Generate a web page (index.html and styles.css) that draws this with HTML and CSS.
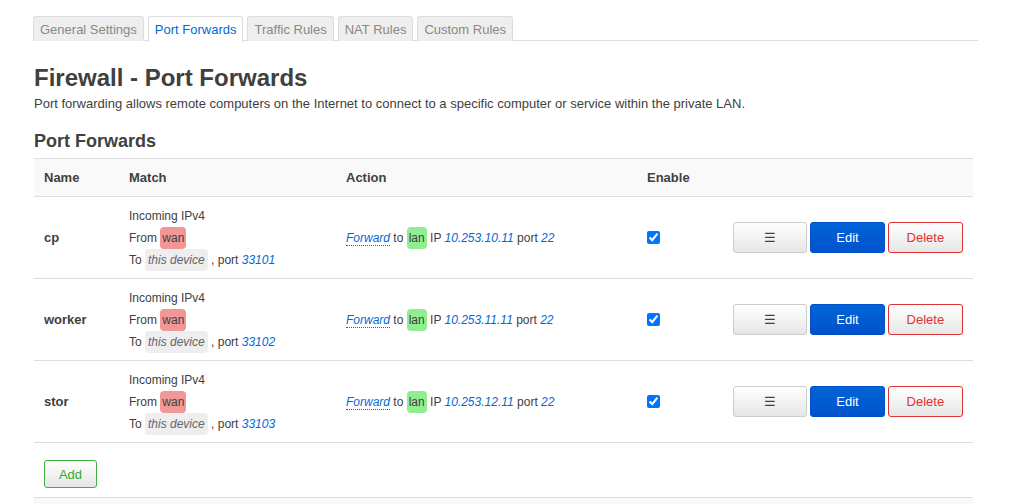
FILE: index.html
```html
<!DOCTYPE html>
<html>
<head>
<meta charset="utf-8">
<link rel="stylesheet" href="styles.css">
</head>
<body>
<div class="page">
  <ul class="tabs">
    <li class="tab">General Settings</li>
    <li class="tab active">Port Forwards</li>
    <li class="tab">Traffic Rules</li>
    <li class="tab">NAT Rules</li>
    <li class="tab">Custom Rules</li>
  </ul>
  <div class="content">
    <h2 class="title">Firewall - Port Forwards</h2>
    <p class="desc">Port forwarding allows remote computers on the Internet to connect to a specific computer or service within the private LAN.</p>
    <h3 class="section">Port Forwards</h3>
    <table class="grid">
      <thead>
        <tr>
          <th class="c-name">Name</th>
          <th class="c-match">Match</th>
          <th class="c-action">Action</th>
          <th class="c-enable">Enable</th>
          <th class="c-btns"></th>
        </tr>
      </thead>
      <tbody>
        <tr>
          <td class="name">cp</td>
          <td class="match">Incoming IPv4<br>From <span class="zone wan">wan</span><br>To <span class="zone dev">this device</span> , port <var>33101</var></td>
          <td class="action"><abbr>Forward</abbr> to <span class="zone lan">lan</span> IP <var>10.253.10.11</var> port <var>22</var></td>
          <td><input type="checkbox" checked></td>
          <td><div class="btns"><button class="btn">☰</button><button class="btn edit">Edit</button><button class="btn del">Delete</button></div></td>
        </tr>
        <tr>
          <td class="name">worker</td>
          <td class="match">Incoming IPv4<br>From <span class="zone wan">wan</span><br>To <span class="zone dev">this device</span> , port <var>33102</var></td>
          <td class="action"><abbr>Forward</abbr> to <span class="zone lan">lan</span> IP <var>10.253.11.11</var> port <var>22</var></td>
          <td><input type="checkbox" checked></td>
          <td><div class="btns"><button class="btn">☰</button><button class="btn edit">Edit</button><button class="btn del">Delete</button></div></td>
        </tr>
        <tr>
          <td class="name">stor</td>
          <td class="match">Incoming IPv4<br>From <span class="zone wan">wan</span><br>To <span class="zone dev">this device</span> , port <var>33103</var></td>
          <td class="action"><abbr>Forward</abbr> to <span class="zone lan">lan</span> IP <var>10.253.12.11</var> port <var>22</var></td>
          <td><input type="checkbox" checked></td>
          <td><div class="btns"><button class="btn">☰</button><button class="btn edit">Edit</button><button class="btn del">Delete</button></div></td>
        </tr>
      </tbody>
    </table>
    <div class="add-row"><button class="btn add">Add</button></div>
    <div class="page-actions"></div>
  </div>
</div>
</body>
</html>
```

FILE: styles.css
```css
* { box-sizing: border-box; }
html, body { margin: 0; padding: 0; background: #fff; }
body {
  font-family: "Liberation Sans", Arial, sans-serif;
  font-size: 13px;
  color: #404040;
}
.page { padding: 16px 45px 0 33px; }
.tabs {
  list-style: none;
  margin: 0;
  padding: 0;
  display: flex;
  gap: 4px;
  border-bottom: 1px solid #ddd;
  height: 25px;
}
.tab {
  height: 25px;
  line-height: 25px;
  padding: 0 6px;
  font-size: 13px;
  color: #888;
  background: #eee;
  border: 1px solid #ddd;
  border-bottom: none;
  border-radius: 3px 3px 0 0;
}
.tab.active {
  background: #fff;
  color: #0069d6;
  height: 26px;
}
.content { padding: 0 5px 0 1px; }
.title {
  margin: 24px 0 0;
  font-size: 24px;
  line-height: 26px;
  font-weight: bold;
  color: #404040;
}
.desc { margin: 4px 0 0; line-height: 18px; }
.section {
  margin: 17px 0 0;
  font-size: 18px;
  line-height: 22px;
  font-weight: bold;
}
.grid {
  margin-top: 6px;
  width: 939px;
  border-collapse: collapse;
  table-layout: fixed;
}
.grid th, .grid td {
  text-align: left;
  padding: 0 10px;
  border-top: 1px solid #ddd;
  border-bottom: 1px solid #ddd;
  vertical-align: middle;
}
.grid th {
  background: #f9f9f9;
  height: 38px;
  font-weight: bold;
  font-size: 13px;
}
.grid td { height: 82px; }
.c-name { width: 85px; }
.c-match { width: 217px; }
.c-action { width: 301px; }
.c-enable { width: 86px; }
.name { font-weight: bold; }
.match { font-size: 12px; line-height: 22px; }
.action { font-size: 12px; }
var { color: #0069d6; font-style: italic; }
abbr {
  color: #0069d6;
  font-style: italic;
  text-decoration: none;
  border-bottom: 1px dotted #0069d6;
}
.zone {
  display: inline-block;
  line-height: 22px;
  padding: 0 2px;
  border-radius: 4px;
}
.wan { background: #f19797; }
.lan { background: #90ee90; }
.dev { background: #eee; font-style: italic; padding: 0 3px; color: #666; }
input[type=checkbox] { margin: 3px 0 0 0; width: 13px; height: 13px; }
.btns { display: flex; gap: 3px; }
.btn {
  font-family: "Liberation Sans", Arial, sans-serif;
  font-size: 13px;
  height: 31px;
  width: 75px;
  border: 1px solid #ccc;
  border-radius: 3px;
  background: linear-gradient(#fff, #e6e6e6);
  color: #404040;
  padding: 0;
}
.btn.edit {
  background: linear-gradient(#0064d6, #0052cc);
  border-color: #0050c8;
  color: #fff;
}
.btn.del {
  width: 76px;
  border-color: #d33;
  color: #d33;
}
.add-row { padding: 17px 0 0 10px; }
.btn.add {
  width: 53px;
  height: 28px;
  border-color: #3cb33c;
  color: #3a3;
}
.page-actions {
  margin-top: 9px;
  width: 939px;
  height: 20px;
  border-top: 1px solid #ddd;
  background: #f9f9f9;
}
```
